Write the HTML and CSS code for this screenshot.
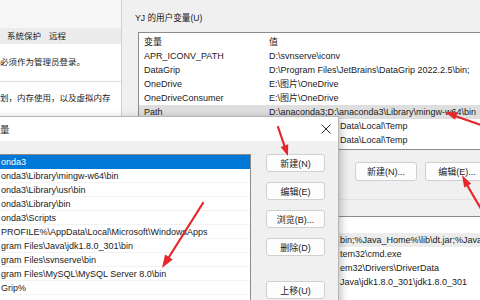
FILE: index.html
```html
<!DOCTYPE html>
<html lang="zh-CN">
<head>
  <meta charset="UTF-8" />
  <title>环境变量</title>
  <link rel="stylesheet" href="styles.css">
</head>
<body>
<div class="desk">

  <!-- 系统属性 (behind) -->
  <section class="win sysprops">
    <div class="sp-top"></div>
    <div class="sp-tabs">
      <span class="tab">系统保护</span>
      <span class="tab">远程</span>
    </div>
    <div class="sp-body">
      <p class="sp-line">必须作为管理员登录。</p>
      <div class="sp-group">
        <p class="sp-line">划，内存使用，以及虚拟内存</p>
      </div>
    </div>
  </section>

  <!-- 环境变量 -->
  <section class="win envvars">
    <div class="ev-label">YJ 的用户变量(U)</div>
    <div class="listbox ev-list">
      <div class="row head"><span class="c1">变量</span><span class="c2">值</span></div>
      <div class="row"><span class="c1">APR_ICONV_PATH</span><span class="c2">D:\svnserve\iconv</span></div>
      <div class="row"><span class="c1">DataGrip</span><span class="c2">D:\Program Files\JetBrains\DataGrip 2022.2.5\bin;</span></div>
      <div class="row"><span class="c1">OneDrive</span><span class="c2">E:\图片\OneDrive</span></div>
      <div class="row"><span class="c1">OneDriveConsumer</span><span class="c2">E:\图片\OneDrive</span></div>
      <div class="row sel"><span class="c1">Path</span><span class="c2">D:\anaconda3;D:\anaconda3\Library\mingw-w64\bin</span></div>
      <div class="row"><span class="tail">Data\Local\Temp</span></div>
      <div class="row"><span class="tail">Data\Local\Temp</span></div>
    </div>
    <div class="ev-btns">
      <button class="btn w62">新建(N)...</button>
      <button class="btn w64">编辑(E)...</button>
    </div>
    <div class="ev-sep"></div>
    <div class="listbox ev-sys">
      <div class="row sel"><span class="tail">bin;%Java_Home%\lib\dt.jar;%Java</span></div>
      <div class="row"><span class="tail">tem32\cmd.exe</span></div>
      <div class="row"><span class="tail">em32\Drivers\DriverData</span></div>
      <div class="row"><span class="tail">Java\jdk1.8.0_301\jdk1.8.0_301</span></div>
    </div>
  </section>

  <!-- 编辑环境变量 -->
  <section class="win editdlg">
    <div class="ed-title">
      <span>量</span>
      <svg class="close" width="10" height="10" viewBox="0 0 10 10">
        <path d="M0.5 0.5 L9.5 9.5 M9.5 0.5 L0.5 9.5" stroke="#2b2b2b" stroke-width="1" fill="none"/>
      </svg>
    </div>
    <div class="ed-body">
      <div class="listbox ed-list">
        <div class="row blue">onda3</div>
        <div class="row">onda3\Library\mingw-w64\bin</div>
        <div class="row">onda3\Library\usr\bin</div>
        <div class="row">onda3\Library\bin</div>
        <div class="row">onda3\Scripts</div>
        <div class="row">PROFILE%\AppData\Local\Microsoft\WindowsApps</div>
        <div class="row">gram Files\Java\jdk1.8.0_301\bin</div>
        <div class="row">gram Files\svnserve\bin</div>
        <div class="row">gram Files\MySQL\MySQL Server 8.0\bin</div>
        <div class="row">Grip%</div>
      </div>
      <div class="ed-btns">
        <button class="btn">新建(N)</button>
        <button class="btn">编辑(E)</button>
        <button class="btn">浏览(B)...</button>
        <button class="btn">删除(D)</button>
        <button class="btn gap">上移(U)</button>
      </div>
    </div>
  </section>

  <!-- 标注箭头 -->
  <svg class="arrows" width="480" height="300" viewBox="0 0 480 300">
    <g stroke="#e5262b" stroke-width="2.2" stroke-linecap="round" fill="#e5262b">
      <line x1="484" y1="126" x2="455" y2="116"/>
      <polygon points="445,112 457.6,112.2 455,119.8" stroke="none"/>
      <line x1="484" y1="214" x2="467" y2="185"/>
      <polygon points="462,175 471.2,183.7 464.2,187.5" stroke="none"/>
      <line x1="278" y1="127" x2="284.5" y2="146"/>
      <polygon points="288,156 288.2,144.3 280.6,146.9" stroke="none"/>
      <line x1="203" y1="203" x2="169" y2="257"/>
      <polygon points="162,268 172.7,259.4 165.1,254.6" stroke="none"/>
    </g>
  </svg>

</div>
</body>
</html>
```

FILE: styles.css
```css
* { box-sizing: border-box; }
body {
  margin: 0;
  font-family: 'Liberation Sans', 'Noto Sans CJK SC', sans-serif;
  font-size: 9px;
  color: #1a1a1a;
  background: #f0f0f0;
}
.desk {
  position: relative;
  width: 480px;
  height: 300px;
  overflow: hidden;
}
.win { position: absolute; }
p { margin: 0; }

/* system properties */
.sysprops {
  left: 0;
  top: 0;
  width: 121px;
  height: 300px;
  background: #fff;
  font-size: 8.5px;
}
.sp-top { height: 28px; background: #f6f6f6; }
.sp-tabs {
  height: 16px;
  background: #ececec;
  display: flex;
  gap: 8px;
  padding-left: 7px;
  line-height: 16px;
}
.sp-body { padding-top: 11px; }
.sp-line { line-height: 14px; white-space: nowrap; }
.sp-group {
  margin-top: 12px;
  border-top: 1px solid #dcdcdc;
  padding-top: 9px;
}

/* environment variables */
.envvars {
  left: 121px;
  top: 0;
  width: 400px;
  height: 300px;
  background: #f0f0f0;
  border-left: 1px solid #d2d2d2;
}
.ev-label {
  padding: 12px 0 0 13px;
  line-height: 12px;
  font-size: 8.6px;
}
.listbox {
  background: #fff;
  border: 1px solid #8c8c8c;
}
.row {
  height: 14px;
  line-height: 14px;
  white-space: nowrap;
  display: flex;
}
.ev-list {
  margin: 8px 0 0 16px;
  padding: 2px 0;
}
.ev-list .c1 { width: 130px; padding-left: 5px; flex: none; }
.ev-list .row.sel { background: #dedede; }
.ev-sys .row.sel { background: #ececec; }
.tail { padding-left: 201px; }
.ev-btns {
  display: flex;
  gap: 8px;
  margin: 12px 0 0 233px;
}
.btn {
  height: 19px;
  padding: 0;
  font: inherit;
  color: #1a1a1a;
  background: #fdfdfd;
  border: 1px solid #d0d0d0;
  border-radius: 3px;
}
.w62 { width: 62px; }
.w64 { width: 64px; }
.ev-sep {
  margin: 18px 0 0 0;
  height: 1px;
  background: #e3e3e3;
}
.ev-sys {
  margin: 16px 0 0 16px;
  padding: 16px 0 0;
  height: 120px;
}

/* edit dialog */
.editdlg {
  left: -50px;
  top: 116px;
  width: 389px;
  height: 200px;
  background: #f0f0f0;
  border: 1px solid #b5b5b5;
  box-shadow: 2px 2px 8px rgba(0,0,0,0.25);
}
.ed-title {
  height: 24px;
  background: #fff;
  display: flex;
  align-items: center;
  justify-content: space-between;
  padding: 0 7px 0 49px;
  font-size: 9.5px;
}
.ed-body {
  display: flex;
  gap: 15px;
  padding: 13px 13px 0 11px;
}
.ed-list {
  width: 289px;
  height: 170px;
}
.ed-list .row { padding-left: 38px; border-bottom: 1px solid #f3f3f3; }
.ed-list .row.blue { background: #0078d7; color: #fff; border-color: #0078d7; }
.ed-btns {
  display: flex;
  flex-direction: column;
  gap: 10px;
}
.ed-btns .btn { width: 59px; height: 18px; }
.ed-btns .gap { margin-top: 15px; }

.arrows {
  position: absolute;
  left: 0;
  top: 0;
  pointer-events: none;
}
```
